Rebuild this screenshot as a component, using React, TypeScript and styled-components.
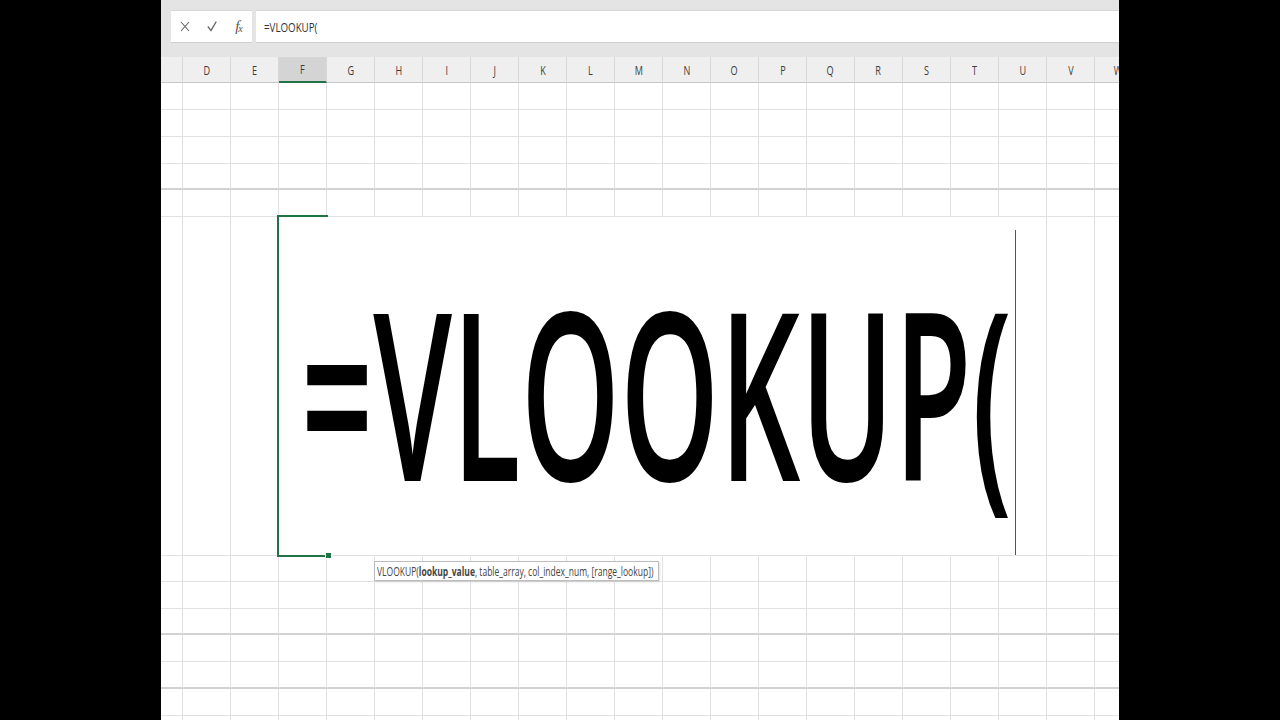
import React from "react";
import styled, { createGlobalStyle } from "styled-components";

const GlobalStyle = createGlobalStyle`
  html, body {
    margin: 0;
    padding: 0;
    background: #000;
    font-family: "Open Sans", "Liberation Sans", sans-serif;
  }
`;

const COLS = ["C", "D", "E", "F", "G", "H", "I", "J", "K", "L", "M", "N", "O", "P", "Q", "R", "S", "T", "U", "V", "W"];
const ROWS = [27, 27, 27, 26, 27, 339, 26, 27, 26, 27, 27, 27, 27];
const THICK = [3, 8, 10];
const EDIT_ROW = 5;
const EDIT_COL = 3;

const Frame = styled.div`
  width: 958px;
  height: 720px;
  margin: 0 auto;
  background: #fff;
  overflow: hidden;
`;

const FormulaArea = styled.div`
  display: flex;
  gap: 4px;
  height: 57px;
  padding: 10px 0 0 10px;
  box-sizing: border-box;
  background: #e4e4e4;
`;

const ButtonBox = styled.div`
  display: flex;
  height: 33px;
  background: #fff;
  border-top: 1px solid #d6d6d6;
  border-bottom: 1px solid #cfcfcf;
  box-sizing: border-box;
`;

const IconSlot = styled.div`
  width: 27px;
  display: flex;
  align-items: center;
  justify-content: center;
  color: #666;
`;

const Fx = styled.span`
  font-family: "Liberation Serif", serif;
  font-style: italic;
  font-size: 15px;
  color: #555;
  letter-spacing: -1px;
  sub {
    font-size: 10px;
    vertical-align: -1px;
  }
`;

const InputBox = styled.div`
  flex: 1;
  height: 33px;
  display: flex;
  align-items: center;
  padding-left: 8px;
  background: #fff;
  border-top: 1px solid #d6d6d6;
  border-bottom: 1px solid #cfcfcf;
  box-sizing: border-box;
`;

const Narrow = styled.span<{ $scale: number; $origin?: string; $size?: number; $color?: string }>`
  display: inline-block;
  white-space: nowrap;
  font-family: "Open Sans", "Liberation Sans", sans-serif;
  font-size: ${(p) => p.$size ?? 13}px;
  color: ${(p) => p.$color ?? "#333"};
  transform: scaleX(${(p) => p.$scale});
  transform-origin: ${(p) => p.$origin ?? "left"} center;
`;

const Sheet = styled.div`
  margin-left: -26px;
  width: ${COLS.length * 48}px;
`;

const HeaderRow = styled.div`
  display: grid;
  grid-template-columns: repeat(${COLS.length}, 48px);
  height: 26px;
`;

const HeaderCell = styled.div<{ $active?: boolean }>`
  display: flex;
  align-items: center;
  justify-content: center;
  box-sizing: border-box;
  background: ${(p) => (p.$active ? "#d4d4d4" : "#efefef")};
  border-right: 1px solid #d8d8d8;
  border-bottom: ${(p) => (p.$active ? "2px solid #217346" : "1px solid #c6c6c6")};
`;

const Row = styled.div<{ $h: number }>`
  display: grid;
  grid-template-columns: repeat(${COLS.length}, 48px);
  height: ${(p) => p.$h}px;
`;

const Cell = styled.div<{ $thick?: boolean }>`
  position: relative;
  box-sizing: border-box;
  border-right: 1px solid #e1e1e1;
  border-bottom: ${(p) => (p.$thick ? "2px solid #d2d2d2" : "1px solid #e1e1e1")};
`;

const Selection = styled.div`
  position: absolute;
  left: -2px;
  top: -2px;
  bottom: -2px;
  width: 49px;
  border: 2px solid #217346;
  border-right: none;
  z-index: 3;
  pointer-events: none;
`;

const Handle = styled.div`
  position: absolute;
  left: 46px;
  bottom: -4px;
  width: 5px;
  height: 5px;
  background: #217346;
  border: 1px solid #fff;
  z-index: 4;
`;

const Editor = styled.div`
  position: absolute;
  left: 0;
  top: 0;
  width: 737px;
  height: 338px;
  background: #fff;
  z-index: 2;
  overflow: hidden;
`;

const BigText = styled.div`
  margin: 57px 0 0 22px;
  font-family: "Open Sans", "Liberation Sans", sans-serif;
  font-size: 234px;
  font-weight: 600;
  line-height: 234px;
  color: #000;
  white-space: nowrap;
  transform: scaleX(0.54);
  transform-origin: left top;
`;

const Caret = styled.div`
  position: absolute;
  right: 0;
  top: 13px;
  bottom: 0;
  width: 1px;
  background: #555;
`;

const Tooltip = styled.div`
  position: absolute;
  left: 95px;
  top: 344px;
  width: 285px;
  height: 20px;
  box-sizing: border-box;
  display: flex;
  align-items: center;
  padding-left: 2px;
  background: #fff;
  border: 1px solid #bdbdbd;
  box-shadow: 1px 1px 2px rgba(0, 0, 0, 0.12);
  z-index: 5;
  b {
    font-weight: 700;
  }
`;

const CloseIcon = () => (
  <svg width="10" height="11" viewBox="0 0 10 11" fill="none" stroke="#666" strokeWidth="1.1">
    <path d="M1 1 L9 10 M9 1 L1 10" />
  </svg>
);

const CheckIcon = () => (
  <svg width="10" height="11" viewBox="0 0 10 11" fill="none" stroke="#666" strokeWidth="1.4" strokeLinecap="round">
    <path d="M1.2 5.8 L4 9.6 L9 1" />
  </svg>
);

const EditingCell: React.FC = () => (
  <Cell>
    <Selection />
    <Editor>
      <BigText>=VLOOKUP(</BigText>
      <Caret />
    </Editor>
    <Handle />
    <Tooltip>
      <Narrow $scale={0.655} $color="#444">
        VLOOKUP(<b>lookup_value</b>, table_array, col_index_num, [range_lookup])
      </Narrow>
    </Tooltip>
  </Cell>
);

export default function App() {
  return (
    <>
      <GlobalStyle />
      <Frame>
        <FormulaArea>
          <ButtonBox>
            <IconSlot>
              <CloseIcon />
            </IconSlot>
            <IconSlot>
              <CheckIcon />
            </IconSlot>
            <IconSlot>
              <Fx>
                f<sub>x</sub>
              </Fx>
            </IconSlot>
          </ButtonBox>
          <InputBox>
            <Narrow $scale={0.75}>=VLOOKUP(</Narrow>
          </InputBox>
        </FormulaArea>
        <Sheet>
          <HeaderRow>
            {COLS.map((c, i) => (
              <HeaderCell key={c} $active={i === EDIT_COL}>
                <Narrow $scale={0.7} $origin="center" $color="#3c3c3c">
                  {c}
                </Narrow>
              </HeaderCell>
            ))}
          </HeaderRow>
          {ROWS.map((h, r) => (
            <Row key={r} $h={h}>
              {COLS.map((c, i) =>
                r === EDIT_ROW && i === EDIT_COL ? (
                  <EditingCell key={c} />
                ) : (
                  <Cell key={c} $thick={THICK.includes(r)} />
                )
              )}
            </Row>
          ))}
        </Sheet>
      </Frame>
    </>
  );
}
